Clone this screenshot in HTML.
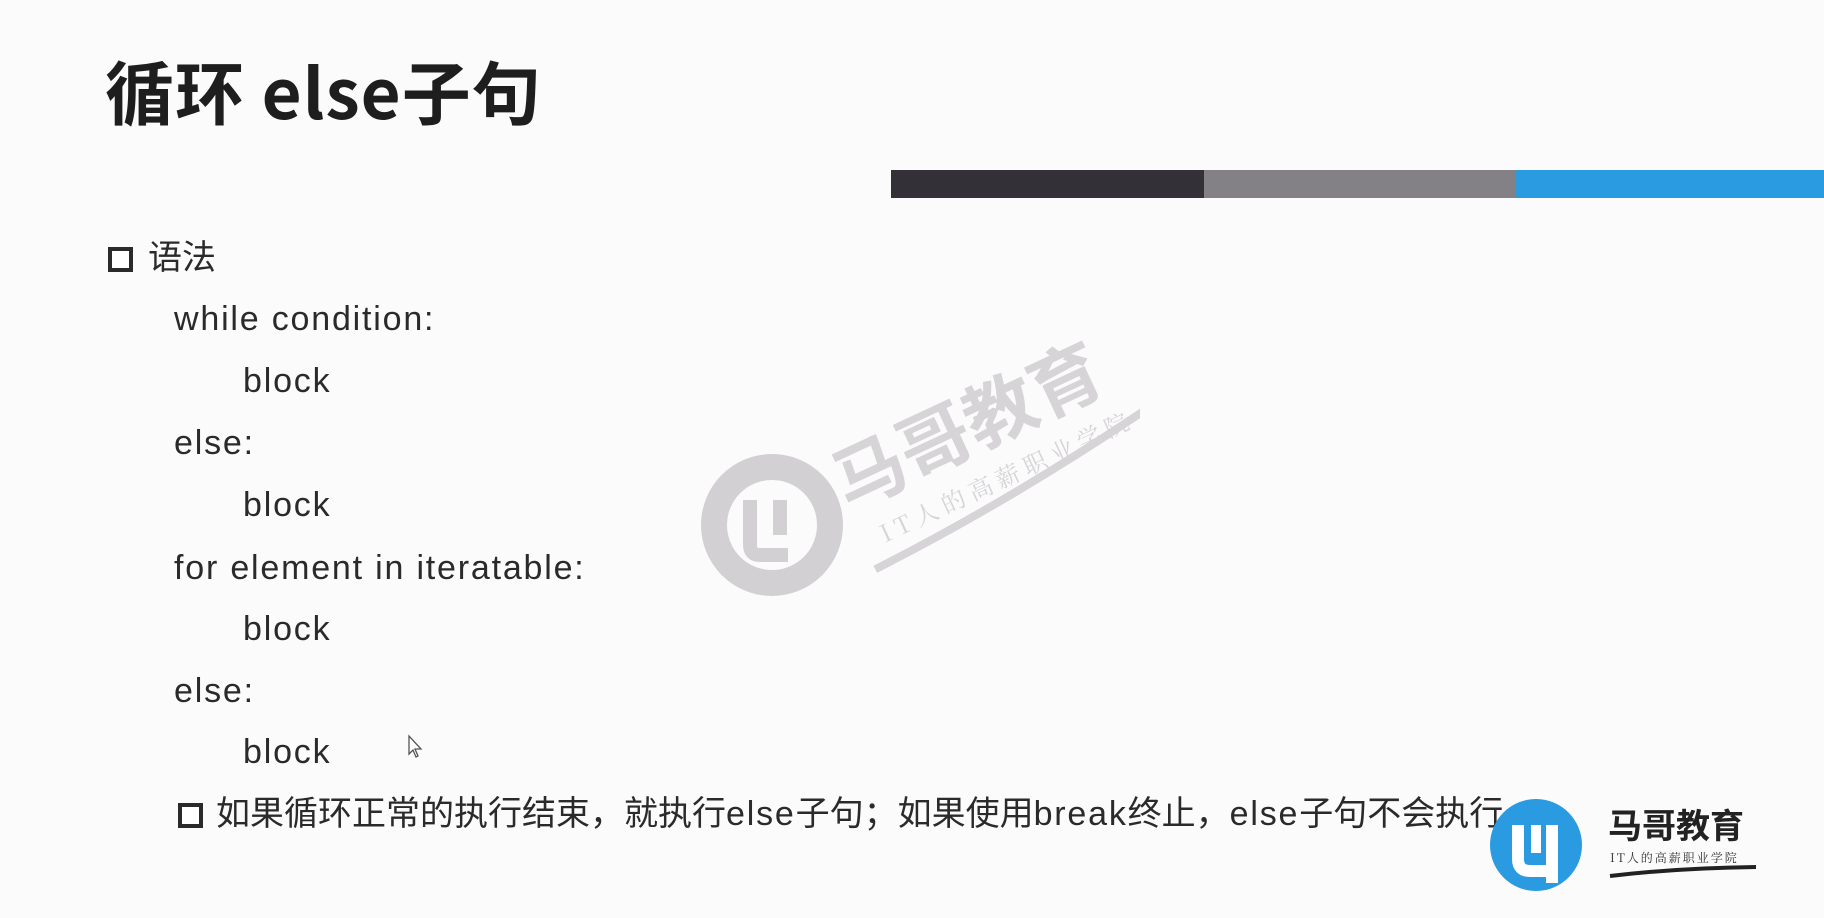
<!DOCTYPE html>
<html><head><meta charset="utf-8"><style>
html,body{margin:0;padding:0}
body{width:1824px;height:918px;background:#fcfbfc;position:relative;overflow:hidden;font-family:"Liberation Sans","Noto Sans CJK SC",sans-serif;color:#2a2a2a}
.a{position:absolute;white-space:nowrap}
.t{font-size:34px;line-height:40px}
.l{letter-spacing:1.8px}
.cb{position:absolute;width:17px;height:17px;border:4px solid #2a2a2a;background:#fff}
</style></head><body>
<div class="a" style="left:105px;top:42px;font-size:69px;font-weight:bold;line-height:94px;color:#1e1e1e;font-family:'Noto Sans CJK SC','Liberation Sans',sans-serif;letter-spacing:1px">循环 else子句</div>
<div class="a" style="left:891px;top:170px;width:313px;height:28px;background:#333037"></div>
<div class="a" style="left:1204px;top:170px;width:311px;height:28px;background:#838185"></div>
<div class="a" style="left:1515px;top:170px;width:309px;height:28px;background:#2a9be0"></div>

<div class="cb" style="left:108px;top:247px"></div>
<div class="a t" style="left:148px;top:238px">语法</div>
<div class="a t l" style="left:174px;top:299px">while condition:</div>
<div class="a t l" style="left:243px;top:361px">block</div>
<div class="a t l" style="left:174px;top:423px">else:</div>
<div class="a t l" style="left:243px;top:485px">block</div>
<div class="a t l" style="left:174px;top:548px">for element in iteratable:</div>
<div class="a t l" style="left:243px;top:609px">block</div>
<div class="a t l" style="left:174px;top:671px">else:</div>
<div class="a t l" style="left:243px;top:732px">block</div>
<svg class="a" style="left:407px;top:734px" width="18" height="26" viewBox="0 0 18 26"><path d="M2 2 L2 20 L6 16 L9 23 L11 22 L8 15 L14 15 Z" fill="#fff" stroke="#555" stroke-width="1.3"/></svg>
<div class="cb" style="left:178px;top:803px"></div>
<div class="a t" style="left:216px;top:794px">如果循环正常的执行结束，就执行<span class="l">else</span>子句；如果使用<span class="l">break</span>终止，<span class="l">else</span>子句不会执行</div>

<!-- watermark -->
<svg class="a" style="left:680px;top:330px" width="460" height="300" viewBox="0 0 460 300">
<g fill="none" stroke="#d2d0d3">
<circle cx="92" cy="195" r="58" stroke-width="26"/>
</g>
<path d="M70 170 L70 215 Q70 225 80 225 L108 225 M100 170 L100 205" stroke="#d2d0d3" stroke-width="14" fill="none"/>
<g transform="rotate(-25 250 120)">
<text x="150" y="140" font-size="72" font-weight="bold" fill="#d6d4d7" font-family="Noto Sans CJK SC,sans-serif">马哥教育</text>
<text x="170" y="185" font-size="24" fill="#d6d4d7" font-family="Noto Serif CJK SC,serif" letter-spacing="6">IT人的高薪职业学院</text>
<path d="M150 205 Q300 200 460 175" stroke="#d6d4d7" stroke-width="8" fill="none"/>
</g>
</svg>

<!-- logo -->
<svg class="a" style="left:1488px;top:797px" width="100" height="100" viewBox="0 0 100 100">
<circle cx="48" cy="48" r="46" fill="#2a9be0"/>
<path d="M30 28 L30 62 Q30 74 42 74 L64 74 L64 86" stroke="#fff" stroke-width="12" fill="none"/>
<path d="M48 28 L48 56" stroke="#fff" stroke-width="10"/>
<path d="M64 28 L64 74" stroke="#fff" stroke-width="12"/>
</svg>
<div class="a" style="left:1608px;top:803px;font-size:34px;font-weight:bold;line-height:42px;color:#222;font-family:'Noto Sans CJK SC',sans-serif">马哥教育</div>
<div class="a" style="left:1610px;top:851px;font-size:12px;line-height:14px;color:#333;letter-spacing:2px;font-family:'Noto Serif CJK SC',serif">IT人的高薪职业学院</div>
<svg class="a" style="left:1608px;top:864px" width="150" height="16"><path d="M2 12 Q70 4 148 3" stroke="#222" stroke-width="4" fill="none"/></svg>
</body></html>
